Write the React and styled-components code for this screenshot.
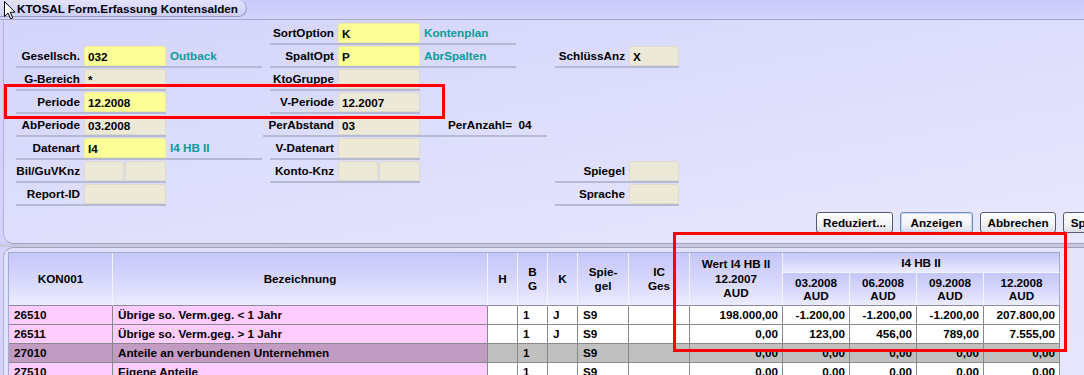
import React from 'react'
import styled, { createGlobalStyle } from 'styled-components'

const GlobalStyle = createGlobalStyle`
  html, body {
    margin: 0;
    padding: 0;
  }
  body {
    font-family: "Liberation Sans", Arial, sans-serif;
    font-size: 11.7px;
    font-weight: bold;
    color: #000;
  }
`

const Screen = styled.div`
  position: relative;
  width: 1084px;
  height: 375px;
  overflow: hidden;
  background: linear-gradient(100deg, #d2d2fc 0%, #dedefd 60%, #e6e6fe 100%);
`

const TitleBar = styled.div`
  height: 19px;
  border-bottom: 1px solid #a6a6c6;
  background: linear-gradient(180deg, #cacafb, #d4d4fc);
`

const Tab = styled.div`
  display: inline-flex;
  align-items: center;
  box-sizing: border-box;
  height: 17px;
  padding: 0 8px 0 17px;
  width: 247px;
  border: 1px solid #9a9ac6;
  border-left: none;
  border-top: none;
  border-radius: 0 9px 9px 0;
  background: linear-gradient(180deg, #e2e2fe, #cecefa);
  font-size: 11.7px;
  white-space: nowrap;
`

const FormPanel = styled.div`
  box-sizing: border-box;
  height: 224px;
  margin-left: 3px;
  padding-top: 3px;
  border-left: 1px solid #b4b4d0;
  border-bottom: 1px solid #a2a2be;
  border-bottom-left-radius: 10px;
  background: linear-gradient(170deg, #d4d4fc 0%, #e2e2fd 70%, #e8e8fe 100%);
`

const FieldRow = styled.div`
  display: grid;
  grid-template-columns: 12px 254px 285px 124px;
  height: 23px;
`

const Group = styled.div`
  grid-column: ${({ $col }) => $col + 1};
  justify-self: start;
  display: flex;
  height: 20px;
  margin-left: ${({ $shift }) => $shift || 0}px;
  border-bottom: 2px solid #b6b9d4;
`

const Label = styled.div`
  box-sizing: border-box;
  width: ${({ $w }) => $w || 68}px;
  padding-right: 4px;
  text-align: right;
  line-height: 20px;
  white-space: nowrap;
`

const Field = styled.div`
  box-sizing: border-box;
  width: ${({ $w }) => $w || 82}px;
  height: 20px;
  margin-left: ${({ $gap }) => $gap || 0}px;
  padding-left: 3px;
  line-height: 19px;
  border: 1px solid ${({ $yellow }) => ($yellow ? '#eeee9a' : '#dedbca')};
  border-radius: 3px 3px 0 0;
  background: ${({ $yellow }) => ($yellow ? '#ffff99' : '#ece9d9')};
  white-space: nowrap;
`

const Desc = styled.div`
  box-sizing: border-box;
  width: ${({ $w }) => $w || 96}px;
  padding-left: ${({ $pad }) => $pad || 4}px;
  line-height: 20px;
  color: ${({ $plain }) => ($plain ? '#000' : '#0a9c9c')};
  white-space: pre;
`

const ButtonRow = styled.div`
  display: flex;
  gap: 7px;
  margin-top: 5px;
  padding-left: 812px;
`

const Button = styled.div`
  flex: none;
  box-sizing: border-box;
  width: ${({ $w }) => $w}px;
  height: 21px;
  line-height: 19px;
  text-align: center;
  border: 1px solid ${({ $focus }) => ($focus ? '#6d8cc4' : '#5a5a6e')};
  border-radius: 3px;
  background: linear-gradient(180deg, #ffffff 0%, #f2f2f8 60%, #dcdce8 100%);
  box-shadow: ${({ $focus }) => ($focus ? 'inset 0 0 0 1px #c8d8f4' : 'none')};
  white-space: nowrap;
  overflow: hidden;
`

const Divider = styled.div`
  height: 3px;
  background: #c8c8de;
`

const TablePanel = styled.div`
  box-sizing: border-box;
  height: 140px;
  margin-left: 3px;
  padding: 4px 0 0 4px;
  border-left: 1px solid #b4b4d0;
  border-top: 1px solid #a2a2be;
  border-top-left-radius: 10px;
  background: linear-gradient(170deg, #e0e0fc, #e6e6fe);
`

const Grid = styled.div`
  display: grid;
  grid-template-columns: 104px 375px 30px 30px 30px 51px 61px 93px 67px 67px 67px 76px;
  grid-template-rows: 20px 33px;
  grid-auto-rows: 19px;
  width: fit-content;
  border-left: 1px solid #9eaed2;
  border-top: 1px solid #9eaed2;
`

const HeadCell = styled.div`
  grid-column: ${({ $span }) => ($span ? `span ${$span}` : 'auto')};
  grid-row: ${({ $rows }) => ($rows ? `span ${$rows}` : 'auto')};
  box-sizing: border-box;
  display: flex;
  align-items: center;
  justify-content: center;
  text-align: center;
  line-height: ${({ $lh }) => $lh || 14}px;
  white-space: pre-line;
  border-right: 1px solid ${({ $last }) => ($last ? '#9eaed2' : '#f4f4ff')};
  border-bottom: 1px solid ${({ $inner }) => ($inner ? '#f4f4ff' : '#8a8aa0')};
  background: linear-gradient(180deg, #c6c6fa 0%, #d8d8fc 55%, #ececff 100%);
`

const tones = {
  key: { pink: '#ffccff', group: '#c19bc1' },
  data: { pink: '#ffffff', group: '#c0c0c0' },
}

const Cell = styled.div`
  box-sizing: border-box;
  padding: 0 ${({ $num }) => ($num ? '4px' : '0')} 0 ${({ $num }) => ($num ? '0' : '5px')};
  line-height: 18px;
  text-align: ${({ $num }) => ($num ? 'right' : 'left')};
  white-space: nowrap;
  overflow: hidden;
  border-right: 1px solid #888;
  border-bottom: 1px solid #888;
  background: ${({ $key, $kind }) => tones[$key ? 'key' : 'data'][$kind]};
`

const Mark = styled.div`
  position: absolute;
  left: ${({ $x }) => $x}px;
  top: ${({ $y }) => $y}px;
  width: ${({ $w }) => $w}px;
  height: ${({ $h }) => $h}px;
  box-sizing: border-box;
  border: 3px solid #ff0000;
  pointer-events: none;
`

const Pointer = styled.svg`
  position: absolute;
  left: 3px;
  top: 0;
`

const FieldGroup = ({ col, label, lw, shift, fields, desc, dw, dpad, plain }) => (
  <Group $col={col} $shift={shift}>
    <Label $w={lw}>{label}</Label>
    {fields.map((f, i) => (
      <Field key={i} $w={f.w} $gap={i ? 1 : 0} $yellow={f.yellow}>
        {f.v}
      </Field>
    ))}
    {desc !== undefined && (
      <Desc $w={dw} $pad={dpad} $plain={plain}>
        {desc}
      </Desc>
    )}
  </Group>
)

const pair = [{ w: 40 }, { w: 41 }]

const rows = [
  {
    id: 'a',
    nr: '26510',
    name: 'Übrige so. Verm.geg. < 1 Jahr',
    kind: 'pink',
    h: '',
    bg: '1',
    k: 'J',
    sp: 'S9',
    ic: '',
    vals: ['198.000,00', '-1.200,00', '-1.200,00', '-1.200,00', '207.800,00'],
  },
  {
    id: 'b',
    nr: '26511',
    name: 'Übrige so. Verm.geg. > 1 Jahr',
    kind: 'pink',
    h: '',
    bg: '1',
    k: 'J',
    sp: 'S9',
    ic: '',
    vals: ['0,00', '123,00', '456,00', '789,00', '7.555,00'],
  },
  {
    id: 'c',
    nr: '27010',
    name: 'Anteile an verbundenen Unternehmen',
    kind: 'group',
    h: '',
    bg: '1',
    k: '',
    sp: 'S9',
    ic: '',
    vals: ['0,00', '0,00', '0,00', '0,00', '0,00'],
  },
  {
    id: 'd',
    nr: '27510',
    name: 'Eigene Anteile',
    kind: 'pink',
    h: '',
    bg: '1',
    k: '',
    sp: 'S9',
    ic: '',
    vals: ['0,00', '0,00', '0,00', '0,00', '0,00'],
  },
]

const App = () => (
  <Screen>
    <GlobalStyle />
    <TitleBar>
      <Tab>KTOSAL Form.Erfassung Kontensalden</Tab>
    </TitleBar>

    <FormPanel>
      <FieldRow>
        <FieldGroup col={2} label="SortOption" fields={[{ v: 'K', yellow: true }]} desc="Kontenplan" />
      </FieldRow>
      <FieldRow>
        <FieldGroup col={1} label="Gesellsch." fields={[{ v: '032', yellow: true }]} desc="Outback" />
        <FieldGroup col={2} label="SpaltOpt" fields={[{ v: 'P', yellow: true }]} desc="AbrSpalten" />
        <FieldGroup col={3} label="SchlüssAnz" lw={74} fields={[{ v: 'X', w: 50 }]} />
      </FieldRow>
      <FieldRow>
        <FieldGroup col={1} label="G-Bereich" fields={[{ v: '*' }]} />
        <FieldGroup col={2} label="KtoGruppe" fields={[{}]} />
      </FieldRow>
      <FieldRow>
        <FieldGroup col={1} label="Periode" fields={[{ v: '12.2008', yellow: true }]} />
        <FieldGroup col={2} label="V-Periode" fields={[{ v: '12.2007' }]} />
      </FieldRow>
      <FieldRow>
        <FieldGroup col={1} label="AbPeriode" fields={[{ v: '03.2008' }]} />
        <FieldGroup
          col={2}
          label="PerAbstand"
          lw={75}
          shift={-7}
          fields={[{ v: '03' }]}
          desc={'PerAnzahl=  04'}
          dw={127}
          dpad={28}
          plain
        />
      </FieldRow>
      <FieldRow>
        <FieldGroup col={1} label="Datenart" fields={[{ v: 'I4', yellow: true }]} desc="I4 HB II" />
        <FieldGroup col={2} label="V-Datenart" fields={[{}]} />
      </FieldRow>
      <FieldRow>
        <FieldGroup col={1} label="Bil/GuVKnz" fields={pair} />
        <FieldGroup col={2} label="Konto-Knz" fields={pair} />
        <FieldGroup col={3} label="Spiegel" lw={74} fields={[{ w: 50 }]} />
      </FieldRow>
      <FieldRow>
        <FieldGroup col={1} label="Report-ID" fields={[{}]} />
        <FieldGroup col={3} label="Sprache" lw={74} fields={[{ w: 50 }]} />
      </FieldRow>

      <ButtonRow>
        <Button $w={77}>Reduziert...</Button>
        <Button $w={73} $focus>
          Anzeigen
        </Button>
        <Button $w={76}>Abbrechen</Button>
        <Button $w={72}>Speichern</Button>
      </ButtonRow>
    </FormPanel>

    <Divider />

    <TablePanel>
      <Grid>
        <HeadCell $rows={2}>KON001</HeadCell>
        <HeadCell $rows={2}>Bezeichnung</HeadCell>
        <HeadCell $rows={2}>H</HeadCell>
        <HeadCell $rows={2}>{'B\nG'}</HeadCell>
        <HeadCell $rows={2}>K</HeadCell>
        <HeadCell $rows={2}>{'Spie-\ngel'}</HeadCell>
        <HeadCell $rows={2}>{'IC\nGes'}</HeadCell>
        <HeadCell $rows={2} $lh={14.5}>
          {'Wert I4 HB II\n12.2007\nAUD'}
        </HeadCell>
        <HeadCell $span={4} $inner $last>
          I4 HB II
        </HeadCell>
        <HeadCell $lh={13}>{'03.2008\nAUD'}</HeadCell>
        <HeadCell $lh={13}>{'06.2008\nAUD'}</HeadCell>
        <HeadCell $lh={13}>{'09.2008\nAUD'}</HeadCell>
        <HeadCell $lh={13} $last>
          {'12.2008\nAUD'}
        </HeadCell>

        {rows.map((r) => (
          <React.Fragment key={r.id}>
            <Cell $key $kind={r.kind}>{r.nr}</Cell>
            <Cell $key $kind={r.kind}>{r.name}</Cell>
            <Cell $kind={r.kind}>{r.h}</Cell>
            <Cell $kind={r.kind}>{r.bg}</Cell>
            <Cell $kind={r.kind}>{r.k}</Cell>
            <Cell $kind={r.kind}>{r.sp}</Cell>
            <Cell $kind={r.kind}>{r.ic}</Cell>
            {r.vals.map((v, i) => (
              <Cell key={i} $num $kind={r.kind}>
                {v}
              </Cell>
            ))}
          </React.Fragment>
        ))}
      </Grid>
    </TablePanel>

    <Mark $x={4} $y={84} $w={441} $h={35} />
    <Mark $x={673} $y={232} $w={394} $h={120} />

    <Pointer width="13" height="20" viewBox="0 0 13 20">
      <path
        d="M1.5 1.5 L1.5 16.5 L5 13 L7.7 18.8 L9.8 17.9 L7.2 12.2 L12 12.2 Z"
        fill="#fff"
        stroke="#000"
        strokeWidth="1"
        strokeLinejoin="miter"
      />
    </Pointer>
  </Screen>
)

export default App
